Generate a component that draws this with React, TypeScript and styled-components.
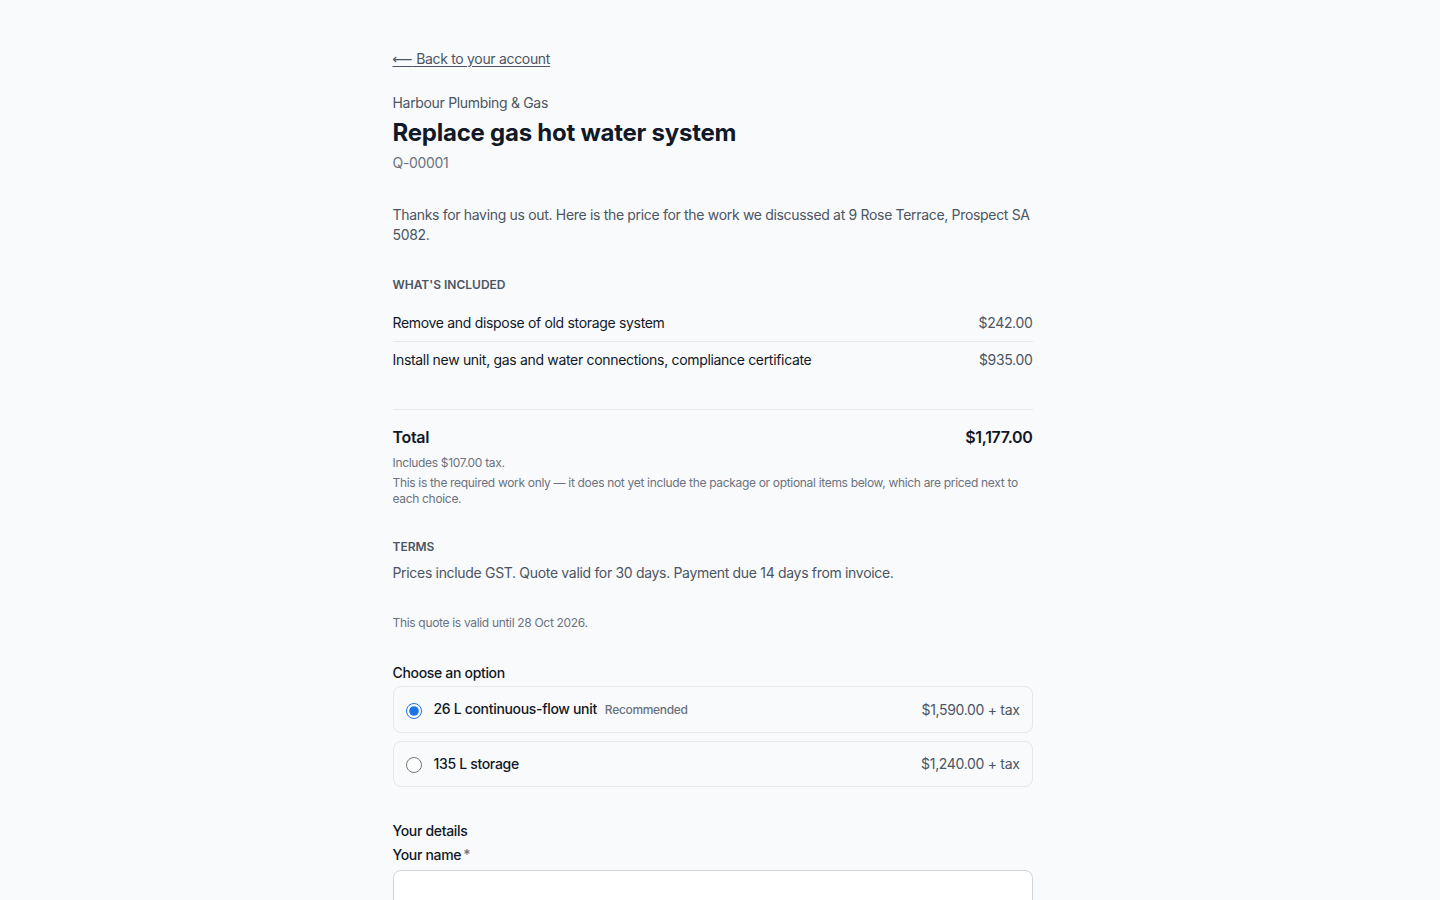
import React, { useState } from "react";
import styled, { createGlobalStyle } from "styled-components";

const GlobalStyle = createGlobalStyle`
    html, body {
        margin: 0;
        padding: 0;
        background: #f9fafb;
        color: #111827;
        font-family: Inter, "Noto Sans", "Liberation Sans", sans-serif;
        letter-spacing: -0.02em;
        -webkit-font-smoothing: antialiased;
    }
    * { box-sizing: border-box; }
`;

// leaves room on the right the way a classic scrollbar gutter would
const Shell = styled.div`
    padding-right: 15px;
`;

const Page = styled.main`
    max-width: 640px;
    margin: 0 auto;
    padding: 48px 0 160px;
`;

const BackLink = styled.a`
    display: inline-block;
    font-size: 14px;
    line-height: 20px;
    color: #4b5563;
    text-decoration: underline;
    text-underline-offset: 2px;
    cursor: pointer;
`;

const Arrow = styled.span`
    font-family: "DejaVu Sans", sans-serif;
    letter-spacing: 0;
`;

const Header = styled.header`
    margin-top: 24px;
    display: flex;
    flex-direction: column;
    gap: 4px;
`;

const Company = styled.div`
    font-size: 14px;
    line-height: 20px;
    color: #4b5563;
`;

const Title = styled.h1`
    margin: 0;
    font-size: 24px;
    line-height: 32px;
    font-weight: 700;
    letter-spacing: -0.01em;
    color: #111827;
`;

const Ref = styled.div`
    font-size: 14px;
    line-height: 20px;
    color: #6b7280;
`;

const Section = styled.section<{ $gap?: number }>`
    margin-top: ${(p) => p.$gap ?? 32}px;
`;

const Intro = styled.p`
    margin: 0;
    font-size: 14px;
    line-height: 20px;
    color: #4b5563;
`;

const Eyebrow = styled.h2`
    margin: 0;
    font-size: 12px;
    line-height: 16px;
    font-weight: 600;
    letter-spacing: 0;
    text-transform: uppercase;
    color: #4b5563;
`;

const Items = styled.ul`
    list-style: none;
    margin: 12px 0 0;
    padding: 0;
`;

const Item = styled.li`
    display: flex;
    justify-content: space-between;
    gap: 16px;
    padding: 8px 0;
    font-size: 14px;
    line-height: 20px;
    color: #111827;
    & + & {
        border-top: 1px solid #e5e7eb;
    }
`;

const Amount = styled.span`
    color: #4b5563;
    white-space: nowrap;
`;

const TotalBlock = styled.div`
    margin-top: 31px;
    padding-top: 15px;
    border-top: 1px solid #e5e7eb;
`;

const TotalRow = styled.div`
    display: flex;
    justify-content: space-between;
    font-size: 16px;
    line-height: 24px;
    font-weight: 600;
    color: #111827;
`;

const Small = styled.p<{ $gap?: number }>`
    margin: ${(p) => p.$gap ?? 4}px 0 0;
    font-size: 12px;
    line-height: 16px;
    color: #6b7280;
`;

const Body = styled.p`
    margin: 8px 0 0;
    font-size: 14px;
    line-height: 20px;
    color: #4b5563;
`;

const Legend = styled.div`
    font-size: 14px;
    line-height: 20px;
    font-weight: 500;
    color: #111827;
`;

const Options = styled.div`
    margin-top: 3px;
    display: flex;
    flex-direction: column;
    gap: 8px;
`;

const OptionCard = styled.label`
    display: flex;
    align-items: center;
    gap: 12px;
    padding: 12px;
    border: 1px solid #e5e7eb;
    border-radius: 8px;
    background: #f9fafb;
    cursor: pointer;
`;

const Radio = styled.input`
    width: 16px;
    height: 16px;
    margin: 2px 0 0 0;
    accent-color: #1a73e8;
`;

const OptionName = styled.span`
    font-size: 14px;
    line-height: 20px;
    font-weight: 500;
    color: #111827;
`;

const Tag = styled.span`
    margin-left: 8px;
    font-size: 12px;
    font-weight: 500;
    color: #6b7280;
`;

const OptionPrice = styled.span`
    margin-left: auto;
    font-size: 14px;
    line-height: 20px;
    color: #4b5563;
`;

const Field = styled.div`
    margin-top: 4px;
    display: flex;
    flex-direction: column;
    gap: 5px;
    & + & {
        margin-top: 16px;
    }
`;

const FieldLabel = styled.label`
    font-size: 14px;
    line-height: 20px;
    font-weight: 500;
    color: #111827;
`;

const Req = styled.span`
    margin-left: 2px;
    color: #6b7280;
`;

const Input = styled.input`
    height: 44px;
    padding: 0 12px;
    font: inherit;
    font-size: 14px;
    border: 1px solid #d1d5db;
    border-radius: 8px;
    background: #ffffff;
    color: #111827;
`;

const Submit = styled.button`
    margin-top: 24px;
    width: 100%;
    height: 44px;
    border: none;
    border-radius: 8px;
    background: #111827;
    color: #ffffff;
    font: inherit;
    font-size: 14px;
    font-weight: 600;
`;

const items = [
    { label: "Remove and dispose of old storage system", amount: "$242.00" },
    { label: "Install new unit, gas and water connections, compliance certificate", amount: "$935.00" },
];

const options = [
    { id: "cf", name: "26 L continuous-flow unit", tag: "Recommended", price: "$1,590.00 + tax" },
    { id: "st", name: "135 L storage", price: "$1,240.00 + tax" },
];

export default function App() {
    const [choice, setChoice] = useState("cf");
    return (
        <Shell>
            <GlobalStyle />
            <Page>
                <BackLink><Arrow>⟵</Arrow> Back to your account</BackLink>
                <Header>
                    <Company>Harbour Plumbing &amp; Gas</Company>
                    <Title>Replace gas hot water system</Title>
                    <Ref>Q-00001</Ref>
                </Header>

                <Section>
                    <Intro>
                        Thanks for having us out. Here is the price for the work we discussed at 9 Rose Terrace, Prospect SA 5082.
                    </Intro>
                </Section>

                <Section>
                    <Eyebrow>What's included</Eyebrow>
                    <Items>
                        {items.map((it) => (
                            <Item key={it.label}>
                                <span>{it.label}</span>
                                <Amount>{it.amount}</Amount>
                            </Item>
                        ))}
                    </Items>
                    <TotalBlock>
                        <TotalRow>
                            <span>Total</span>
                            <span>$1,177.00</span>
                        </TotalRow>
                        <Small $gap={6}>Includes $107.00 tax.</Small>
                        <Small>
                            This is the required work only — it does not yet include the package or optional items below, which are priced next to each choice.
                        </Small>
                    </TotalBlock>
                </Section>

                <Section>
                    <Eyebrow>Terms</Eyebrow>
                    <Body>Prices include GST. Quote valid for 30 days. Payment due 14 days from invoice.</Body>
                </Section>

                <Section>
                    <Small $gap={0}>This quote is valid until 28 Oct 2026.</Small>
                </Section>

                <Section>
                    <Legend>Choose an option</Legend>
                    <Options>
                        {options.map((o) => (
                            <OptionCard key={o.id}>
                                <Radio
                                    type="radio"
                                    name="option"
                                    checked={choice === o.id}
                                    onChange={() => setChoice(o.id)}
                                />
                                <OptionName>
                                    {o.name}
                                    {o.tag && <Tag>{o.tag}</Tag>}
                                </OptionName>
                                <OptionPrice>{o.price}</OptionPrice>
                            </OptionCard>
                        ))}
                    </Options>
                </Section>

                <Section $gap={34}>
                    <Legend>Your details</Legend>
                    <Field>
                        <FieldLabel>Your name<Req>*</Req></FieldLabel>
                        <Input type="text" />
                    </Field>
                    <Field>
                        <FieldLabel>Email<Req>*</Req></FieldLabel>
                        <Input type="email" />
                    </Field>
                    <Field>
                        <FieldLabel>Phone</FieldLabel>
                        <Input type="tel" />
                    </Field>
                    <Field>
                        <FieldLabel>Notes</FieldLabel>
                        <Input type="text" />
                    </Field>
                    <Submit>Accept quote</Submit>
                </Section>
            </Page>
        </Shell>
    );
}
